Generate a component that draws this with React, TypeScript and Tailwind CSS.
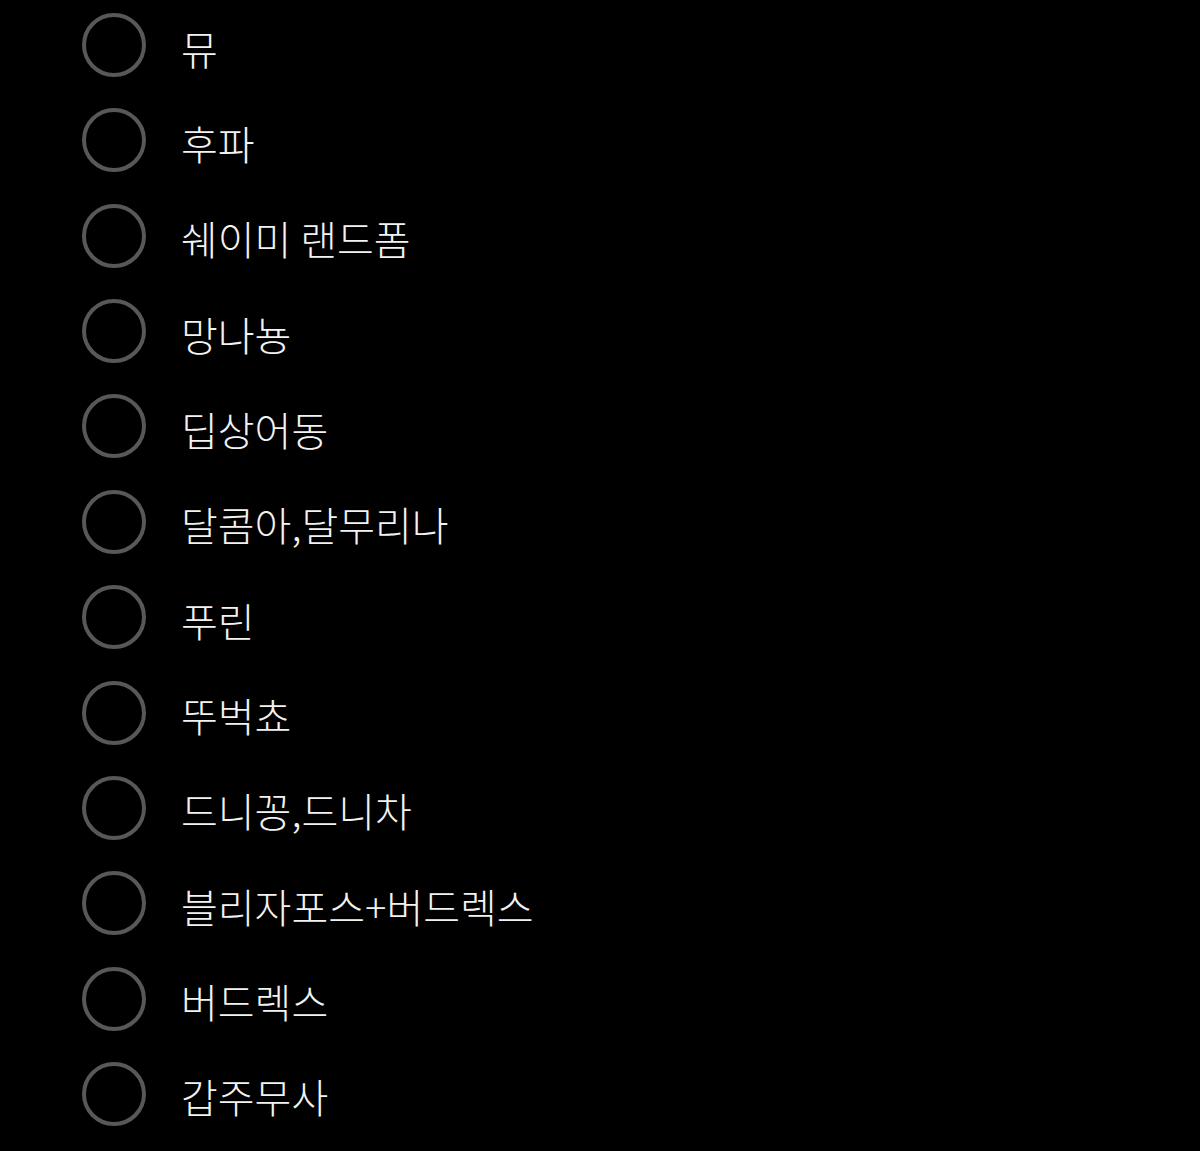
const options = [
  "뮤",
  "후파",
  "쉐이미 랜드폼",
  "망나뇽",
  "딥상어동",
  "달콤아,달무리나",
  "푸린",
  "뚜벅쵸",
  "드니꽁,드니차",
  "블리자포스+버드렉스",
  "버드렉스",
  "갑주무사",
]

export default function App() {
  return (
    <div className="min-h-[1151px] w-[1200px] overflow-hidden bg-black font-['Noto_Sans_CJK_KR','Noto_Sans',sans-serif]">
      <ul className="flex flex-col gap-[31.36px] pl-[82px] pt-[13px]">
        {options.map((name) => (
          <li key={name} className="flex h-16 items-center gap-[35px]">
            <span className="h-16 w-16 shrink-0 rounded-full border-4 border-[#58585a]" />
            <span className="mt-[5px] text-[40px] font-light leading-none text-[#f2f2f2]">
              {name}
            </span>
          </li>
        ))}
      </ul>
    </div>
  )
}
